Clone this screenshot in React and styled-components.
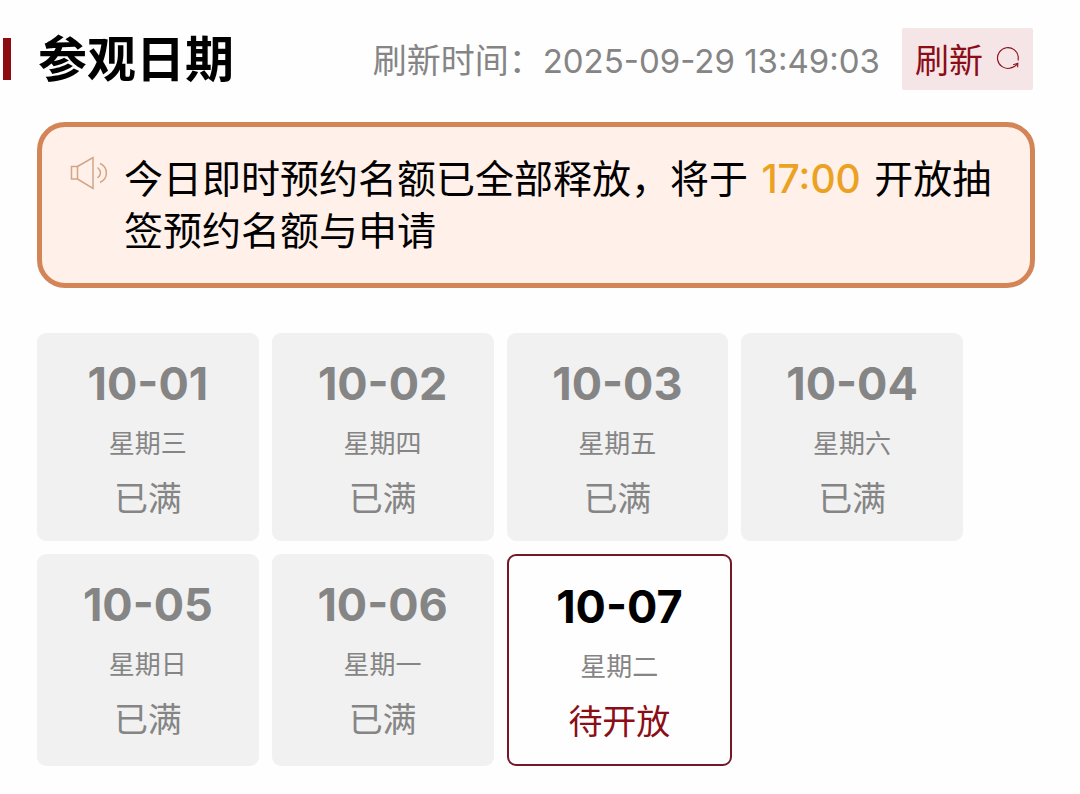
import React from 'react';
import styled, { createGlobalStyle } from 'styled-components';

const days = [
    { date: '10-01', week: '星期三', open: false },
    { date: '10-02', week: '星期四', open: false },
    { date: '10-03', week: '星期五', open: false },
    { date: '10-04', week: '星期六', open: false },
    { date: '10-05', week: '星期日', open: false },
    { date: '10-06', week: '星期一', open: false },
    { date: '10-07', week: '星期二', open: true },
];

const RefreshIcon = () => (
    <svg width="24" height="24" viewBox="0 0 24 24" fill="none" stroke="currentColor" strokeWidth="1.1" aria-hidden="true">
        <path d="M22.2 14.5V10.5A10.4 10.4 0 1 0 13.5 22.3Q18.5 21.5 21.3 18" />
        <path d="M17.2 18.8L21.8 17.3L21.6 21.3" />
    </svg>
);

const SpeakerIcon = () => (
    <svg width="38" height="36" viewBox="0 0 38 36" fill="none" stroke="currentColor" strokeWidth="1.5" aria-hidden="true">
        <path d="M1.5 11.5H7.5V24H1.5Z" />
        <path d="M7.5 11.5L23 2.5V33.5L7.5 24" />
        <path d="M27.5 12.5Q33.5 17.5 27.5 23" />
        <path d="M30 8.5C38.5 12.5 38.5 23.5 30 27.5" />
    </svg>
);

const App = () => {
    return (
        <Page>
            <GlobalStyle />
            <Header>
                <Title>参观日期</Title>
                <Updated>
                    刷新时间：<Stamp>2025-09-29 13:49:03</Stamp>
                </Updated>
                <RefreshButton type="button">
                    刷新
                    <RefreshIcon />
                </RefreshButton>
            </Header>
            <Notice>
                <NoticeIcon>
                    <SpeakerIcon />
                </NoticeIcon>
                <NoticeText>
                    今日即时预约名额已全部释放，将于<Hour> 17:00 </Hour>开放抽签预约名额与申请
                </NoticeText>
            </Notice>
            <DayList>
                {days.map(day => (
                    <DayCard key={day.date} type="button" disabled={!day.open} $open={day.open}>
                        <DayDate>{day.date}</DayDate>
                        <DayWeek>{day.week}</DayWeek>
                        <DayStatus $open={day.open}>{day.open ? '待开放' : '已满'}</DayStatus>
                    </DayCard>
                ))}
            </DayList>
        </Page>
    );
};

const GlobalStyle = createGlobalStyle`
body{
    margin:0;
    background:#fefefe;
    color:#000;
    font-family:"Noto Sans CJK SC", sans-serif;
}
button{
    margin:0;
    border:0;
    font-family:inherit;
}
`;

const Page = styled.main`
padding:28px 45px 27px 37px;
`;

const Header = styled.header`
display:flex;
align-items:center;
height:62px;
margin-left:-34px;
margin-right:2px;
&::before{
    content:"";
    width:8px;
    height:42px;
    margin-right:27px;
    background:#8b0d12;
}
`;

const Title = styled.h1`
margin:0 auto 0 0;
padding-bottom:6px;
font-size:49px;
line-height:56px;
font-weight:700;
white-space:nowrap;
`;

const Updated = styled.p`
margin:0 22px 0 0;
color:#858585;
font-size:34px;
line-height:60px;
white-space:nowrap;
`;

const Stamp = styled.time`
font-family:Inter, sans-serif;
font-size:33px;
line-height:1;
`;

const RefreshButton = styled.button`
display:flex;
align-items:center;
gap:13px;
height:62px;
padding:0 13px 2px;
border-radius:2px;
background:#f6e5e7;
color:#8b0d18;
font-size:34px;
white-space:nowrap;
`;

const Notice = styled.section`
display:flex;
margin-top:32px;
padding:23px 34px 29px 28px;
border:5px solid #d38558;
border-radius:28px;
background:#fff0e9;
`;

const NoticeIcon = styled.span`
flex:none;
width:54px;
padding-top:5px;
color:#d3a585;
`;

const NoticeText = styled.p`
margin:0;
font-size:39px;
line-height:52px;
`;

const Hour = styled.strong`
margin:0 3px;
color:#eba223;
font-family:Inter, sans-serif;
font-weight:500;
line-height:1;
`;

const DayList = styled.div`
display:flex;
flex-wrap:wrap;
gap:13px;
margin-top:45px;
padding-right:72px;
`;

const DayCard = styled.button`
display:flex;
flex-direction:column;
align-items:center;
justify-content:flex-start;
box-sizing:content-box;
width:calc((100% - 39px) / 4);
padding:23px 0 22px;
border:${props => props.$open ? '2px solid #741827' : '0'};
border-radius:9px;
background:${props => props.$open ? '#fefefe' : '#f1f1f1'};
color:${props => props.$open ? '#000' : '#858585'};
`;

const DayDate = styled.strong`
font-family:Inter, sans-serif;
font-size:45px;
line-height:56px;
font-weight:700;
`;

const DayWeek = styled.span`
margin-top:13px;
color:#858585;
font-size:26px;
line-height:34px;
`;

const DayStatus = styled.span`
margin-top:16px;
color:${props => props.$open ? '#8b0d18' : '#858585'};
font-size:34px;
line-height:44px;
`;

export default App;
